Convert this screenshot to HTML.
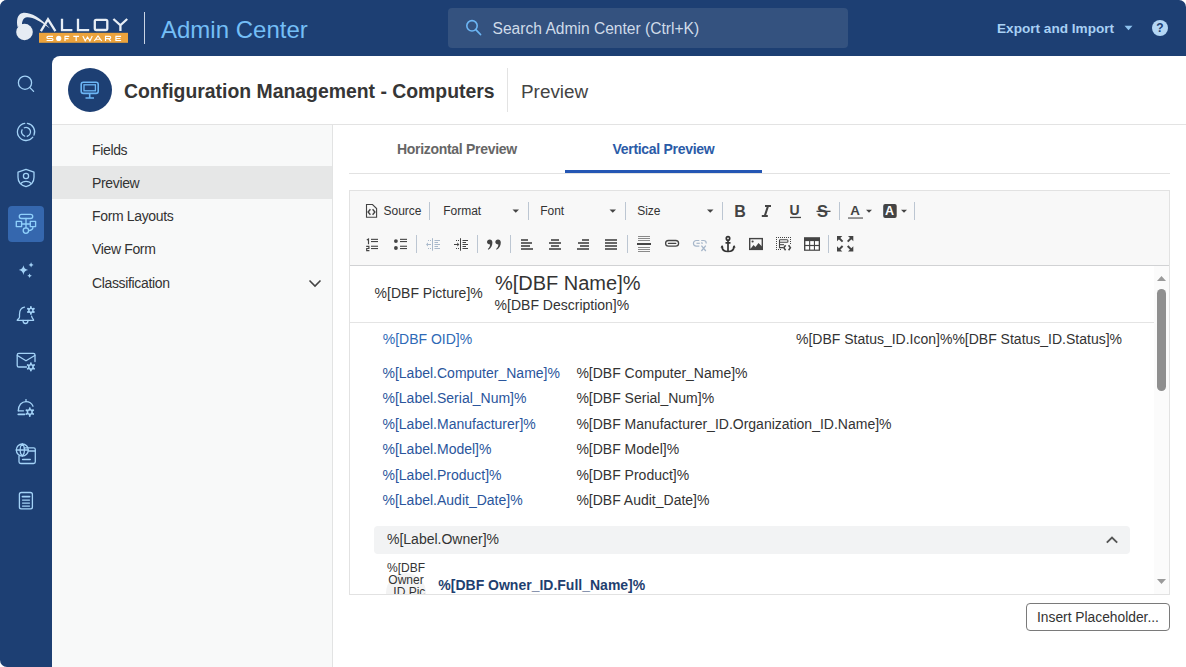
<!DOCTYPE html>
<html><head><meta charset="utf-8">
<style>
*{box-sizing:border-box;margin:0;padding:0}
html,body{width:1186px;height:667px;overflow:hidden;background:#fff;font-family:"Liberation Sans",sans-serif}
.win{position:absolute;left:0;top:0;width:1186px;height:667px}
.t{position:absolute;white-space:nowrap;line-height:1}
.main{position:absolute;left:52px;top:56px;width:1134px;height:611px;background:#fff;border-top-left-radius:8px;border-bottom-right-radius:7px;overflow:hidden}
.nav{position:absolute;left:0;top:69px;width:281px;height:560px;background:#f8f9f9;border-right:1px solid #e2e3e3}
.navi{position:absolute;left:0;width:280px;height:33px}
.navi span{position:absolute;left:40px;top:10.2px;font-size:14px;letter-spacing:-0.35px;line-height:1;color:#333}
svg{position:absolute;overflow:visible}
.ic{fill:none;stroke:#a3d2f7;stroke-width:1.3;stroke-linecap:round;stroke-linejoin:round}
.tb{fill:none;stroke:#444;stroke-width:1.5}
.sep{position:absolute;width:1px;height:18px;background:#bcc6d2}
.c{position:absolute;white-space:nowrap;line-height:1;font-size:14px;color:#333}
.lb{color:#2a559c}
</style></head><body>
<div class="win">
  <div style="position:absolute;left:0;top:0;width:1186px;height:56px;background:#1d3f73;border-radius:7px 7px 0 0"></div>
  <div style="position:absolute;left:0;top:0;width:52px;height:667px;background:#1d3f73;border-radius:7px 0 0 7px"></div>
  <div style="position:absolute;left:52px;top:56px;width:12px;height:12px;background:#1d3f73"></div>
  <!-- ===== header ===== -->
  <svg style="left:0;top:0" width="140" height="56" viewBox="0 0 140 56">
    <path d="M17.6,27 C16.3,21 17,13.6 22.8,12.9 C30,12.2 40,17 50,28.5 C41,21.8 32.5,16.8 27,17.3 C23.5,17.8 21.8,21 22,25 Z" fill="#e6ecf3"/>
    <circle cx="24.5" cy="32" r="8.3" fill="#e6ecf3"/>
    <g fill="none" stroke="#e8eef5" stroke-width="2.3">
      <path d="M40.9,31.1 L48,19.3 L55.4,31.1"/>
      <path d="M62,18.7 V30.1 H72.4"/>
      <path d="M78,18.7 V30.1 H89.2"/>
      <rect x="94.8" y="19.8" width="12.5" height="10.2" rx="1.4" stroke-width="2.3"/>
      <path d="M113.4,19 L120.4,25.3 L127.2,19 M120.4,25.3 V31.1"/>
    </g>
    <rect x="39" y="32.8" width="89" height="10" fill="#eca33c"/>
    <g fill="none" stroke="#fff" stroke-width="1.15">
      <path d="M53,36.4 H48.2 Q46.9,36.4 46.9,37.5 Q46.9,38.5 48.2,38.5 H51.7 Q53,38.5 53,39.5 Q53,40.5 51.7,40.5 H46.6"/>
      <path d="M65,41 V36.4 H69.3 M65,38.6 H68.6"/>
      <path d="M73.3,36.4 H79 M76.15,36.4 V41"/>
      <path d="M82.8,36 L85.2,40.8 L87.55,37 L89.9,40.8 L92.3,36"/>
      <path d="M94.3,41 L98,36 L101.7,41 M95.8,39.2 H100.2"/>
      <path d="M105.5,41 V36.4 H109.4 Q110.7,36.4 110.7,37.5 Q110.7,38.6 109.4,38.6 H105.5 M108.5,38.6 L110.8,41"/>
      <path d="M121.1,36.4 H115.9 V40.5 H121.1 M115.9,38.45 H120.5"/>
    </g>
    <circle cx="58.7" cy="38.4" r="2.6" fill="#fff"/>
  </svg>
  <div style="position:absolute;left:144px;top:12px;width:1px;height:32px;background:#c9d4e4"></div>
  <div class="t" style="left:161px;top:18px;font-size:24px;color:#74bef6">Admin Center</div>
  <div style="position:absolute;left:448px;top:8px;width:400px;height:40px;background:#34527f;border-radius:4px"></div>
  <svg style="left:464px;top:18px" width="20" height="20" viewBox="0 0 20 20"><circle cx="8" cy="7.8" r="5.2" fill="none" stroke="#6cb6f5" stroke-width="1.6"/><path d="M11.8,11.6 L16.5,16.5" stroke="#6cb6f5" stroke-width="1.8" stroke-linecap="round"/></svg>
  <div class="t" style="left:492.5px;top:20.7px;font-size:15.6px;color:#cfdbe9">Search Admin Center (Ctrl+K)</div>
  <div class="t" style="left:997px;top:21.7px;font-size:13.6px;font-weight:700;color:#a8d0f4">Export and Import</div>
  <svg style="left:1124px;top:25px" width="10" height="6" viewBox="0 0 10 6"><path d="M0.5,0.8 H8.5 L4.5,5.2 Z" fill="#8fc3ef"/></svg>
  <svg style="left:1152px;top:20px" width="16" height="16" viewBox="0 0 16 16"><circle cx="8" cy="8" r="8" fill="#b3d6f4"/><text x="8" y="12.3" text-anchor="middle" font-family="Liberation Sans" font-weight="700" font-size="12" fill="#1d3f73">?</text></svg>

  <!-- ===== sidebar ===== -->
  <div style="position:absolute;left:8px;top:206px;width:36px;height:36px;border-radius:4px;background:#3567ae"></div>
  <svg style="left:0;top:0" width="52" height="667" viewBox="0 0 52 667" class="ic">
    <circle cx="25" cy="82.7" r="6.6"/><path d="M29.9,87.6 L33.6,91.4"/>
    <path d="M27.40,123.41 A8.6,8.6 0 0 1 34.02,135.12 M32.83,137.19 A8.6,8.6 0 1 1 24.70,123.41 M24.36,127.73 A4.5,4.5 0 1 1 27.21,136.25 M24.66,136.18 A4.5,4.5 0 0 1 22.04,129.86"/>
    <path d="M26,169.3 L34,172.2 V177.3 C34,181.8 30.6,185.4 26,186.7 C21.4,185.4 18,181.8 18,177.3 V172.2 Z"/><circle cx="26" cy="176" r="2.6"/><path d="M21,183.5 C22.5,180.6 29.5,180.6 31,183.5"/>
    <g stroke="#8fd0fb" stroke-width="1.35">
      <rect x="19.3" y="214.3" width="13.4" height="4.2" rx="2.1"/><path d="M26,218.5 V228"/>
      <rect x="16.3" y="221.3" width="5.3" height="5.3"/><rect x="30.3" y="221.3" width="5.3" height="5.3"/><path d="M21.6,224 H30.3"/>
      <circle cx="25.9" cy="230.6" r="2.7"/><path d="M28.6,230.6 C31,230.6 33,229.5 33,226.6"/>
    </g>
    <g fill="#a3d2f7" stroke="none">
      <path d="M23.4,265.3 Q24,269.3 28.1,269.9 Q24,270.5 23.4,274.9 Q22.8,270.5 18.8,269.9 Q22.8,269.3 23.4,265.3 Z"/>
      <path d="M31.1,262.3 Q31.4,264.6 33.6,264.9 Q31.4,265.2 31.1,267.5 Q30.8,265.2 28.6,264.9 Q30.8,264.6 31.1,262.3 Z"/>
      <path d="M29.6,273.5 Q29.9,275.5 31.9,275.8 Q29.9,276.1 29.6,278.1 Q29.3,276.1 27.3,275.8 Q29.3,275.5 29.6,273.5 Z"/>
    </g>
    <path d="M24.5,307.2 C20.5,307.8 19.5,312 19.5,314.5 V317 C19.5,318.6 17.2,319.2 17.2,320.3 H33.6 C33.6,319.2 32,318.6 31.6,316.2"/>
    <path d="M23,320.5 C23,324.5 28,324.5 28,320.5"/>
    <circle cx="30.9" cy="310.4" r="2.1"/><path d="M30.90,308.30 L30.90,306.90 M32.72,309.35 L33.93,308.65 M32.72,311.45 L33.93,312.15 M30.90,312.50 L30.90,313.90 M29.08,311.45 L27.87,312.15 M29.08,309.35 L27.87,308.65 " stroke-width="1.8"/>
    <path d="M26.5,367 H18.8 C17.9,367 17.2,366.3 17.2,365.4 V354.9 C17.2,354 17.9,353.3 18.8,353.3 H33.4 C34.3,353.3 35,354 35,354.9 V361.5"/>
    <path d="M17.4,355.5 L26,360.8 L34.8,355.5"/>
    <circle cx="30.9" cy="366.9" r="2.3"/><path d="M30.90,364.60 L30.90,363.20 M32.89,365.75 L34.10,365.05 M32.89,368.05 L34.10,368.75 M30.90,369.20 L30.90,370.60 M28.91,368.05 L27.70,368.75 M28.91,365.75 L27.70,365.05 " stroke-width="1.8"/>
    <path d="M18.3,410.8 C18.3,405 21.8,401.6 26,401.6 C29.2,401.6 31.8,403.5 33,406.2"/><path d="M26,399.6 V401.6"/>
    <path d="M18.3,410.8 H23.5"/><path d="M18.3,414.3 H24.5" stroke-width="1.8"/>
    <circle cx="29.8" cy="412.1" r="2.4"/><path d="M29.80,409.70 L29.80,408.20 M31.88,410.90 L33.18,410.15 M31.88,413.30 L33.18,414.05 M29.80,414.50 L29.80,416.00 M27.72,413.30 L26.42,414.05 M27.72,410.90 L26.42,410.15 " stroke-width="1.8"/>
    <path d="M24,447.9 H33.6 C34.6,447.9 35.3,448.6 35.3,449.6 V461.8 C35.3,462.8 34.6,463.5 33.6,463.5 H20.7 C19.7,463.5 19,462.8 19,461.8 V456"/>
    <path d="M28.5,451 H35.2" stroke-width="1.6"/><path d="M22.6,459.6 H30.2" stroke-width="1.5"/>
    <circle cx="22.3" cy="450" r="6"/><path d="M16.3,450 H28.3 M22.3,444 C19.3,446.5 19.3,453.5 22.3,456 M22.3,444 C25.3,446.5 25.3,453.5 22.3,456"/>
    <rect x="19.4" y="492.5" width="13" height="16.4" rx="2"/>
    <path d="M22.5,496.6 H29.5" stroke-width="1.9"/><path d="M22.5,500.1 H29.5 M22.5,503.1 H29.5 M22.5,506.1 H29.5" stroke-width="1.3"/>
  </svg>
  <!-- ===== main ===== -->
  <div class="main">
    <div style="position:absolute;left:16px;top:12px;width:44px;height:44px;border-radius:50%;background:#1d3f73"></div>
    <svg style="left:28px;top:25px" width="20" height="19" viewBox="0 0 20 19"><rect x="1.2" y="1.2" width="17" height="11.2" rx="2.2" fill="none" stroke="#6cb6f5" stroke-width="1.6"/><rect x="4" y="3.8" width="11.4" height="6" fill="none" stroke="#6cb6f5" stroke-width="1.3"/><path d="M9.7,12.4 V16.5 M5.5,17 H14" stroke="#6cb6f5" stroke-width="1.6"/></svg>
    <div class="t" style="left:72px;top:26.3px;font-size:19.4px;font-weight:700;color:#363636">Configuration Management - Computers</div>
    <div style="position:absolute;left:455px;top:12px;width:1px;height:44px;background:#e3e3e3"></div>
    <div class="t" style="left:469px;top:27.4px;font-size:18.9px;color:#444">Preview</div>
    <div style="position:absolute;left:0;top:68px;width:1134px;height:1px;background:#e3e3e3"></div>
    <div class="nav">
      <div class="navi" style="top:8px"><span>Fields</span></div>
      <div class="navi" style="top:41px;background:#e6e7e7"><span>Preview</span></div>
      <div class="navi" style="top:74px"><span>Form Layouts</span></div>
      <div class="navi" style="top:107px"><span>View Form</span></div>
      <div class="navi" style="top:141px"><span>Classification</span></div>
      <svg style="left:256px;top:153.5px" width="14" height="9" viewBox="0 0 14 9"><path d="M1.5,1.5 L7,7 L12.5,1.5" fill="none" stroke="#444" stroke-width="1.6"/></svg>
    </div>
  </div>

  <!-- ===== tabs ===== -->
  <div style="position:absolute;left:349px;top:173px;width:821px;height:1px;background:#e2e2e2"></div>
  <div class="t" style="left:397px;top:142.2px;font-size:14px;font-weight:700;letter-spacing:-0.3px;color:#666">Horizontal Preview</div>
  <div class="t" style="left:612.5px;top:142.2px;font-size:14px;font-weight:700;letter-spacing:-0.3px;color:#2b5ba7">Vertical Preview</div>
  <div style="position:absolute;left:565px;top:170px;width:197px;height:3px;background:#2456b4"></div>

  <!-- ===== editor ===== -->
  <div style="position:absolute;left:349px;top:190px;width:821px;height:405px;border:1px solid #e2e2e2;background:#fff"></div>
  <div style="position:absolute;left:350px;top:191px;width:819px;height:75px;background:#f8f8f8;border-bottom:1px solid #d1d2d4"></div>

  <!-- toolbar text -->
  <div class="t" style="left:383.5px;top:205px;font-size:12px;color:#333">Source</div>
  <div class="t" style="left:443.2px;top:205px;font-size:12px;color:#333">Format</div>
  <div class="t" style="left:540.2px;top:205px;font-size:12px;color:#333">Font</div>
  <div class="t" style="left:637.2px;top:205px;font-size:12px;color:#333">Size</div>
  <div class="sep" style="left:429px;top:202px"></div>
  <div class="sep" style="left:528px;top:202px"></div>
  <div class="sep" style="left:625px;top:202px"></div>
  <div class="sep" style="left:722px;top:202px"></div>
  <div class="sep" style="left:839px;top:202px"></div>
  <div class="sep" style="left:914px;top:202px"></div>
  <div class="sep" style="left:416px;top:235px"></div>
  <div class="sep" style="left:477px;top:235px"></div>
  <div class="sep" style="left:510px;top:235px"></div>
  <div class="sep" style="left:627px;top:235px"></div>
  <div class="sep" style="left:828px;top:235px"></div>
  <svg style="left:0;top:0" width="1186" height="667" viewBox="0 0 1186 667">
    <g fill="#444">
      <!-- dropdown arrows -->
      <path d="M512.5,209.5 h6.5 l-3.25,3.2 z"/>
      <path d="M609.5,209.5 h6.5 l-3.25,3.2 z"/>
      <path d="M707,209.5 h6.5 l-3.25,3.2 z"/>
      <path d="M866,209.8 h6 l-3,3 z"/>
      <path d="M901,209.8 h6 l-3,3 z"/>
    </g>
    <!-- source icon -->
    <path d="M366.5,204.5 H372.5 L376.6,208.6 V217.3 H366.5 Z" fill="none" stroke="#444" stroke-width="1.1"/>
    <path d="M370.4,209.3 L368.1,212 L370.4,214.7 M372.6,209.3 L374.9,212 L372.6,214.7" fill="none" stroke="#444" stroke-width="1.4"/>
    <!-- B I U S -->
    <text x="734.2" y="216.9" font-family="Liberation Sans" font-weight="700" font-size="16" fill="#444">B</text>
    <path d="M765,206.1 H771 M761.8,215.9 H767.8 M768,206.1 L764.8,215.9" fill="none" stroke="#444" stroke-width="2"/>
    <text x="789.6" y="215.3" font-family="Liberation Sans" font-weight="700" font-size="14" fill="#444">U</text>
    <rect x="790" y="216.8" width="11" height="1.3" fill="#444"/>
    <text x="817" y="216.9" font-family="Liberation Sans" font-weight="700" font-size="16.5" fill="#444">S</text>
    <rect x="816.5" y="210.7" width="14" height="1.3" fill="#444"/>
    <!-- text color / bg color -->
    <text x="850.2" y="214.5" font-family="Liberation Sans" font-weight="700" font-size="13.4" fill="#444">A</text>
    <rect x="848" y="217.2" width="15" height="1.7" fill="#888"/>
    <rect x="883.2" y="203.9" width="13.5" height="14" rx="2" fill="#444"/>
    <text x="885" y="215" font-family="Liberation Sans" font-weight="700" font-size="12.5" fill="#fff">A</text>
    <!-- row 2 -->
    <g fill="#444">
      <!-- numbered list -->
      <path d="M366.8,240 L368.5,239 V244.2 M366.2,246.3 H368.9 V248.5 H366.7 V250.6 H369.4" fill="none" stroke="#444" stroke-width="1.15"/>
      <rect x="371" y="238.8" width="7" height="1.1"/><rect x="371" y="241" width="7" height="1.1"/>
      <rect x="371" y="245.7" width="7" height="1.1"/><rect x="371" y="248" width="7" height="1.1"/>
      <!-- bullet list -->
      <circle cx="395.9" cy="241.1" r="1.9"/><circle cx="395.9" cy="248" r="1.9"/>
      <rect x="400" y="238.8" width="7" height="1.1"/><rect x="400" y="241" width="7" height="1.1"/>
      <rect x="400" y="245.7" width="7" height="1.1"/><rect x="400" y="248" width="7" height="1.1"/>
    </g>
    <!-- outdent (disabled) -->
    <g fill="#a9b9cb">
      <rect x="432" y="238.2" width="1" height="12.5"/>
      <rect x="434.5" y="240" width="5.5" height="1"/><rect x="434.5" y="242" width="3.5" height="1"/>
      <rect x="434.5" y="244" width="5.5" height="1"/><rect x="434.5" y="246" width="3.5" height="1"/>
      <rect x="434.5" y="248" width="5.5" height="1"/>
      <rect x="427" y="244" width="4" height="1"/><path d="M426,244.5 l2,-2 v4 z"/>
      <rect x="428" y="240" width="1" height="1"/><rect x="430" y="240" width="1" height="1"/>
      <rect x="428" y="248" width="1" height="1"/><rect x="430" y="248" width="1" height="1"/>
    </g>
    <!-- indent -->
    <g fill="#444">
      <rect x="460" y="238.2" width="1" height="12.5"/>
      <rect x="462.5" y="240" width="5.5" height="1"/><rect x="462.5" y="242" width="3.5" height="1"/>
      <rect x="462.5" y="244" width="5.5" height="1"/><rect x="462.5" y="246" width="3.5" height="1"/>
      <rect x="462.5" y="248" width="5.5" height="1"/>
      <rect x="454" y="244" width="4" height="1"/><path d="M459.3,244.5 l-2,-2 v4 z"/>
      <rect x="456" y="240" width="1" height="1"/><rect x="458" y="240" width="1" height="1"/>
      <rect x="456" y="248" width="1" height="1"/><rect x="458" y="248" width="1" height="1"/>
    </g>
    <!-- blockquote -->
    <g fill="#444">
      <path d="M487,242.1 C487,240.6 488.2,239.6 489.7,239.6 C491.3,239.6 492.4,240.8 492.4,242.4 C492.4,245.6 491,248.3 488.3,249.8 L487.8,249 C489.3,247.8 490,246.5 490.1,244.6 C488.3,244.6 487,243.6 487,242.1 Z"/>
      <path d="M495.3,242.1 C495.3,240.6 496.5,239.6 498,239.6 C499.6,239.6 500.8,240.8 500.8,242.4 C500.8,245.6 499.3,248.3 496.6,249.8 L496.1,249 C497.6,247.8 498.3,246.5 498.4,244.6 C496.6,244.6 495.3,243.6 495.3,242.1 Z"/>
    </g>
    <!-- aligns -->
    <g fill="#444">
      <rect x="521" y="239.2" width="7" height="1.6"/><rect x="521" y="242.2" width="11" height="1.6"/><rect x="521" y="245.2" width="9" height="1.6"/><rect x="521" y="248.2" width="12" height="1.6"/>
      <rect x="551" y="239.2" width="8" height="1.6"/><rect x="549" y="242.2" width="12" height="1.6"/><rect x="551" y="245.2" width="8" height="1.6"/><rect x="549" y="248.2" width="12" height="1.6"/>
      <rect x="582" y="239.2" width="7" height="1.6"/><rect x="578" y="242.2" width="11" height="1.6"/><rect x="580" y="245.2" width="9" height="1.6"/><rect x="577" y="248.2" width="12" height="1.6"/>
      <rect x="605" y="239.2" width="12" height="1.6"/><rect x="605" y="242.2" width="12" height="1.6"/><rect x="605" y="245.2" width="12" height="1.6"/><rect x="605" y="248.2" width="12" height="1.6"/>
    </g>
    <!-- hr -->
    <g fill="#8a8a8a">
      <rect x="638" y="236" width="12" height="1"/><rect x="638" y="238" width="12" height="1"/><rect x="638" y="240" width="12" height="1"/>
      <rect x="638" y="247" width="12" height="1"/><rect x="638" y="249" width="12" height="1"/><rect x="638" y="251" width="12" height="1"/>
    </g>
    <rect x="637" y="243" width="14" height="2" fill="#444"/>
    <!-- link -->
    <rect x="665.6" y="240.5" width="13" height="5.7" rx="2.85" fill="none" stroke="#444" stroke-width="1.3"/>
    <rect x="667.8" y="242.7" width="8.6" height="1.4" rx="0.7" fill="#444"/>
    <!-- unlink -->
    <g fill="none" stroke="#a7b7ca" stroke-width="1.2">
      <path d="M699.3,240.5 H696.3 a2.85,2.85 0 0 0 0,5.7 H699.3"/>
      <path d="M699.8,243.3 H696.5"/>
      <path d="M701.2,240.5 H703.6 a2.6,2.6 0 0 1 2.6,2.6 V243.6"/>
      <path d="M701,242.8 l1.8,0.6"/>
      <path d="M701.4,245.6 L705.8,251 M705.8,245.6 L701.4,251" stroke-width="1.3"/>
    </g>
    <!-- anchor -->
    <g fill="none" stroke="#333" stroke-width="1.7">
      <circle cx="728" cy="238.4" r="1.7"/>
      <path d="M728,240.2 V251 M725.5,242.8 H730.5"/>
      <path d="M722,246.5 C722,250 725,251.5 728,251.5 C731,251.5 734,250 734,246.5"/>
    </g>
    <path d="M720.5,247.5 l1.6,-2.5 l1.6,2.5 z M732.5,247.5 l1.6,-2.5 l1.6,2.5 z" fill="#333"/>
    <!-- image -->
    <rect x="749.7" y="238.6" width="12.6" height="10.8" fill="none" stroke="#444" stroke-width="1.4"/>
    <circle cx="752.6" cy="241.5" r="1.1" fill="#444"/>
    <path d="M750,249.5 L753.5,245 L755.5,247 L758.5,243 L762,246.5 V249.5 Z" fill="#444"/>
    <!-- template -->
    <g fill="#444">
      <rect x="776" y="237" width="1" height="1"/><rect x="778" y="237" width="1" height="1"/><rect x="780" y="237" width="1" height="1"/><rect x="782" y="237" width="1" height="1"/><rect x="784" y="237" width="1" height="1"/><rect x="786" y="237" width="1" height="1"/><rect x="788" y="237" width="1" height="1"/><rect x="790" y="237" width="1" height="1"/>
      <rect x="776" y="249" width="1" height="1"/><rect x="778" y="249" width="1" height="1"/><rect x="780" y="249" width="1" height="1"/>
      <rect x="776" y="239" width="1" height="1"/><rect x="776" y="241" width="1" height="1"/><rect x="776" y="243" width="1" height="1"/><rect x="776" y="245" width="1" height="1"/><rect x="776" y="247" width="1" height="1"/>
      <rect x="790" y="239" width="1" height="1"/><rect x="790" y="241" width="1" height="1"/><rect x="790" y="243" width="1" height="1"/>
    </g>
    <g fill="none" stroke="#444" stroke-width="1.1">
      <path d="M779.5,239.7 H787 C788.3,239.7 788.3,242.3 787,242.3 H779.5 M779.5,239.7 V247.6 H783"/>
      <path d="M779.5,244.7 H784"/>
      <path d="M785.6,245.3 L783.8,247.8 L785.6,250.3 M788.6,245.3 L790.4,247.8 L788.6,250.3" stroke-width="1.5"/>
    </g>
    <!-- table -->
    <rect x="804" y="237.2" width="16" height="13.6" fill="#444"/>
    <g fill="#fff">
      <rect x="805.4" y="241.1" width="3.7" height="3.8"/><rect x="810.2" y="241.1" width="3.7" height="3.8"/><rect x="815" y="241.1" width="3.7" height="3.8"/>
      <rect x="805.4" y="246.1" width="3.7" height="3.5"/><rect x="810.2" y="246.1" width="3.7" height="3.5"/><rect x="815" y="246.1" width="3.7" height="3.5"/>
    </g>
    <!-- maximize -->
    <g fill="#444">
      <path d="M837,236 h5.3 l-5.3,5.3 z"/><path d="M853.3,236 h-5.3 l5.3,5.3 z"/>
      <path d="M837,251.6 h5.3 l-5.3,-5.3 z"/><path d="M853.3,251.6 h-5.3 l5.3,-5.3 z"/>
    </g>
    <path d="M838.5,237.5 L842.6,241.6 M851.8,237.5 L847.7,241.6 M838.5,250.1 L842.6,246 M851.8,250.1 L847.7,246" stroke="#444" stroke-width="2"/>
  </svg>

  <!-- ===== content ===== -->
  <div class="c" style="left:374.6px;top:286.4px">%[DBF Picture]%</div>
  <div class="c" style="left:494.9px;top:272.9px;font-size:20px">%[DBF Name]%</div>
  <div class="c" style="left:494.6px;top:298.1px">%[DBF Description]%</div>
  <div style="position:absolute;left:350px;top:322px;width:804px;height:1px;background:#e4e4e4"></div>
  <div class="c" style="left:382.7px;top:331.6px;color:#2d69b6">%[DBF OID]%</div>
  <div class="c" style="left:796px;top:331.6px">%[DBF Status_ID.Icon]%%[DBF Status_ID.Status]%</div>
  <div class="c lb" style="left:382.5px;top:366.4px">%[Label.Computer_Name]%</div>
  <div class="c" style="left:576.4px;top:366.4px">%[DBF Computer_Name]%</div>
  <div class="c lb" style="left:382.5px;top:391px">%[Label.Serial_Num]%</div>
  <div class="c" style="left:576.4px;top:391px">%[DBF Serial_Num]%</div>
  <div class="c lb" style="left:382.5px;top:416.9px">%[Label.Manufacturer]%</div>
  <div class="c" style="left:576.4px;top:416.9px">%[DBF Manufacturer_ID.Organization_ID.Name]%</div>
  <div class="c lb" style="left:382.5px;top:442.1px">%[Label.Model]%</div>
  <div class="c" style="left:576.4px;top:442.1px">%[DBF Model]%</div>
  <div class="c lb" style="left:382.5px;top:468.2px">%[Label.Product]%</div>
  <div class="c" style="left:576.4px;top:468.2px">%[DBF Product]%</div>
  <div class="c lb" style="left:382.5px;top:492.6px">%[Label.Audit_Date]%</div>
  <div class="c" style="left:576.4px;top:492.6px">%[DBF Audit_Date]%</div>
  <div style="position:absolute;left:374px;top:526px;width:756px;height:28px;background:#f2f3f4;border-radius:4px"></div>
  <div class="c" style="left:387px;top:532.2px">%[Label.Owner]%</div>
  <svg style="left:1105px;top:536px" width="14" height="9" viewBox="0 0 14 9"><path d="M1.8,6.6 L7,1.5 L12.2,6.6" fill="none" stroke="#555" stroke-width="1.9"/></svg>
  <div style="position:absolute;left:350px;top:555px;width:804px;height:39px;overflow:hidden">
    <div style="position:absolute;left:36px;top:18px;width:40px;height:40px;border-radius:50%;background:#f3f3f3"></div>
    <div style="position:absolute;left:36px;top:6.5px;width:40px;text-align:center;font-size:12px;line-height:12.2px;color:#333">%[DBF<br>Owner<br>_ID.Pic</div>
    <div class="c" style="left:88.3px;top:22.9px;font-weight:700;color:#1f3f70">%[DBF Owner_ID.Full_Name]%</div>
  </div>
  <!-- scrollbar -->
  <div style="position:absolute;left:1154px;top:266px;width:15px;height:328px;background:#fbfbfb"></div>
  <svg style="left:0;top:0" width="1186" height="667" viewBox="0 0 1186 667">
    <path d="M1157,281 h9 l-4.5,-5 z" fill="#9a9a9a"/>
    <path d="M1157,579 h9 l-4.5,5 z" fill="#9a9a9a"/>
  </svg>
  <div style="position:absolute;left:1157px;top:289px;width:9px;height:102px;border-radius:4.5px;background:#8f8f8f"></div>

  <!-- button -->
  <div style="position:absolute;left:1026px;top:603px;width:144px;height:28px;border:1px solid #7a7a7a;border-radius:4px;background:#fff"></div>
  <div class="t" style="left:1037px;top:611px;font-size:13.8px;color:#333">Insert Placeholder...</div>
</div>
</body></html>
